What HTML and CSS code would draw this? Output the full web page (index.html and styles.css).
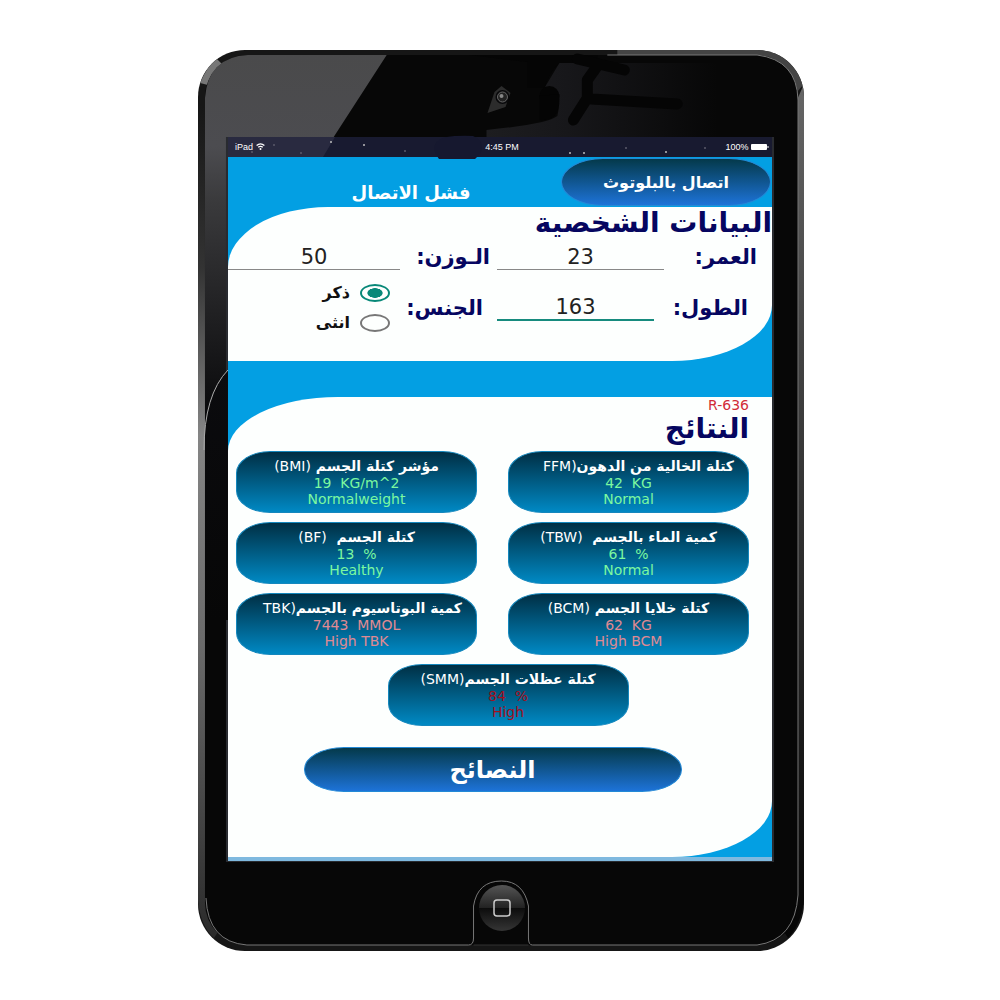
FILE: index.html
```html
<!DOCTYPE html>
<html lang="ar">
<head>
<meta charset="utf-8">
<meta name="viewport" content="width=device-width, initial-scale=1">
<title>البيانات الشخصية</title>
<link rel="stylesheet" href="styles.css">
</head>
<body>
<div class="tablet">
  <svg class="frame" viewBox="0 0 607 901" preserveAspectRatio="none" aria-hidden="true">
    <defs>
      <linearGradient id="gloss" x1="0" y1="0" x2="0" y2="1">
        <stop offset="0" stop-color="#4a4a4b"/><stop offset=".25" stop-color="#4c4c50"/><stop offset=".4" stop-color="#3a3a3c"/><stop offset="1" stop-color="#08080a"/>
      </linearGradient>
      <linearGradient id="edge" x1="0" y1="0" x2="0" y2="1">
        <stop offset="0" stop-color="#151515"/><stop offset=".2" stop-color="#333"/><stop offset=".4" stop-color="#858585"/><stop offset=".65" stop-color="#6a6a6a"/><stop offset="1" stop-color="#2a2a2a"/>
      </linearGradient>
      <linearGradient id="edgeRight" x1="0" y1="0" x2="0" y2="1">
        <stop offset="0" stop-color="#666"/><stop offset=".3" stop-color="#444"/><stop offset="1" stop-color="#050505"/>
      </linearGradient>
      <linearGradient id="haze"><stop offset="0" stop-color="#1d1d20"/><stop offset=".35" stop-color="#17171a"/><stop offset="1" stop-color="#070707"/></linearGradient>
      <linearGradient id="fade" x1="0" y1="0" x2="0" y2="1"><stop offset="0" stop-color="#0b0b0e"/><stop offset="1" stop-color="#070707"/></linearGradient>
      <clipPath id="body"><rect width="607" height="901" rx="47"/></clipPath>
    </defs>
    <g clip-path="url(#body)">
      <rect width="607" height="901" fill="#161616"/>
      <path d="M0 50V850Q2 875 16 888L24 876Q8 862 7 840V60Z" fill="url(#edge)"/>
      <path d="M607 34V850Q604 875 591 888L583 876Q598 862 600 840V50Z" fill="url(#edgeRight)"/>
      <path d="M420 0H607V34L600 42Q588 9 560 5H420Z" fill="#444"/>
      <path d="M2 33Q9 17 18 8L25 15Q14 24 10 35Z" fill="#777"/>
    </g>
    <rect x="7" y="5" width="594" height="890" rx="42" fill="#070707"/>
    <path d="M7 320V48Q10 7 50 5H189L121 110L90 150H30V370H7Z" fill="url(#gloss)"/>
    <path d="M362 13H520V87H289V80Q350 74 360 66Q366 40 347 38Z" fill="url(#haze)"/>
    <path d="M272 5H400V13H362Q352 22 347 38H330V12Z" fill="#050505"/>
    <circle cx="352" cy="46" r="10" fill="#040404"/>
    <path d="M342 46V70Q362 72 362 50V44Z" fill="#040404"/>
    <path d="M380 9L427 20M400 16L390 30V48L376 70M394 49L480 54" fill="none" stroke="#050505" stroke-width="11" stroke-linecap="round" stroke-linejoin="round"/>
    <path d="M290 63L297 42L304 36L313 43L308 57Z" fill="#2c2c2c"/>
    <circle cx="305" cy="47" r="7" fill="#08080a"/><circle cx="305" cy="47" r="5" fill="#222" stroke="#666"/><circle cx="304" cy="46" r="2" fill="#888"/>
    <path d="M28 87H577V812H28Z" fill="#292b30"/>
    <path d="M30 320Q7 347 7 400V570H30Z" fill="url(#fade)"/>
    <path d="M30 320Q6 345 6 400" fill="none" stroke="#aaa"/>
    <path d="M410 5H560Q600 10 601 50V845Q598 890 560 895H335Q331 895 331 888V856Q326 831 304 831Q280 831 276 856V888Q276 895 271 895H49Q10 892 8 848" fill="none" stroke="#777"/>
    <path d="M276 895H331" stroke="#333"/>
  </svg>

  <main class="screen">
    <div class="status-bar" dir="ltr">
      <svg class="stars" viewBox="0 0 544 20" preserveAspectRatio="none" aria-hidden="true">
        <path d="M0 0H107L95 20H0Z" fill="#292a40"/>
        <path d="M210 4Q215-2 245-1Q258 4 252 17L247 22H211Q202 10 210 4Z" fill="#16182f"/>
        <g fill="#bbb"><circle cx="103" cy="5" r="1"/><circle cx="136" cy="8" r="1"/><circle cx="356" cy="16" r="1"/><circle cx="342" cy="16" r="1"/><circle cx="438" cy="15" r="1"/></g>
        <g fill="#5a5a6a"><circle cx="46" cy="8" r="1"/><circle cx="24" cy="15" r="1"/><circle cx="177" cy="14" r="1"/><circle cx="398" cy="11" r="1"/><circle cx="477" cy="11" r="1"/><circle cx="73" cy="16" r="1"/></g>
      </svg>
      <span class="carrier">iPad
        <svg width="9" height="7" viewBox="0 0 9 7" aria-hidden="true"><path d="M0.6 2.6Q4.5-.8 8.4 2.6M2.2 4.3Q4.5 2.4 6.8 4.3" fill="none" stroke="#fff" stroke-width="1.3"/><circle cx="4.5" cy="6" r="1" fill="#fff"/></svg>
      </span>
      <span>4:45 PM</span>
      <span class="battery">100%
        <svg width="18" height="6" viewBox="0 0 18 6" aria-hidden="true"><rect width="16" height="6" rx="1" fill="#fff"/><path d="M17 2V4" stroke="#fff"/></svg>
      </span>
    </div>

    <div class="app" dir="rtl">
      <header class="top">
        <button class="action connect" type="button">اتصال بالبلوتوث</button>
        <p class="status">فشل الاتصال</p>
      </header>

      <form class="panel personal">
        <h1 class="heading">البيانات الشخصية</h1>
        <div class="fields first">
          <label for="age">العمر:</label>
          <input class="entry" id="age" type="text" inputmode="numeric" value="23">
          <label for="weight">الـوزن:</label>
          <input class="entry" id="weight" type="text" inputmode="numeric" value="50">
        </div>
        <div class="fields second">
          <label for="height">الطول:</label>
          <input class="entry" id="height" type="text" inputmode="numeric" value="163">
          <span class="name" id="sex">الجنس:</span>
          <div class="choices" role="radiogroup" aria-labelledby="sex">
            <label class="choice"><input type="radio" name="sex" checked>ذكر</label>
            <label class="choice"><input type="radio" name="sex">انثى</label>
          </div>
        </div>
      </form>

      <section class="panel results">
        <p class="code"><bdi>R-636</bdi></p>
        <h2 class="heading">النتائج</h2>
        <div class="cards">
          <article class="card good"><h3 class="long">كتلة الخالية من الدهون<span>(FFM</span></h3><p dir="ltr">42&nbsp; KG</p><p>Normal</p></article>
          <article class="card good"><h3>مؤشر كتلة الجسم <span>(BMI)</span></h3><p dir="ltr">19&nbsp; KG/m^2</p><p>Normalweight</p></article>
          <article class="card good"><h3>كمية الماء بالجسم &nbsp;<span>(TBW)</span></h3><p dir="ltr">61&nbsp; %</p><p>Normal</p></article>
          <article class="card good"><h3>كتلة الجسم &nbsp;<span>(BF)</span></h3><p dir="ltr">13&nbsp; %</p><p>Healthy</p></article>
          <article class="card high"><h3>كتلة خلايا الجسم <span>(BCM)</span></h3><p dir="ltr">62&nbsp; KG</p><p>High BCM</p></article>
          <article class="card high"><h3 class="long">كمية البوتاسيوم بالجسم<span>(TBK</span></h3><p dir="ltr">7443&nbsp; MMOL</p><p>High TBK</p></article>
          <article class="card alert"><h3>كتلة عظلات الجسم<span>(SMM)</span></h3><p dir="ltr">84&nbsp; %</p><p>High</p></article>
        </div>
        <button class="action advice" type="button">النصائح</button>
      </section>
    </div>
  </main>

  <footer class="chin">
    <button class="home" type="button" aria-label="Home">
      <svg width="18" height="18" viewBox="0 0 18 18" aria-hidden="true"><rect x="1" y="1" width="16" height="16" rx="3" fill="none" stroke="#ccc" stroke-width="1.5"/></svg>
    </button>
  </footer>
</div>
</body>
</html>
```
FILE: styles.css
```css
* {
  box-sizing: border-box;
  margin: 0;
}

body {
  padding: 50px 16px 48px 18px;
  background: #fff;
  font-family: "DejaVu Sans", "Noto Sans", sans-serif;
}

button,
input {
  font: inherit;
}

.tablet {
  position: relative;
  max-width: 606px;
  margin: 0 auto;
  padding: 87px 32px 0 30px;
}

.frame {
  position: absolute;
  inset: 0;
  width: 100%;
  height: 100%;
}

.screen {
  position: relative;
}

/* Status bar */
.status-bar {
  position: relative;
  display: grid;
  grid-template-columns: 1fr auto 1fr;
  align-items: center;
  height: 20px;
  padding: 0 3px 0 7px;
  background: #181a30;
  color: #fff;
  font: 9px/20px "Liberation Sans", Arial, sans-serif;
}

.stars {
  position: absolute;
  inset: 0;
  width: 100%;
  height: 100%;
  overflow: visible;
}

.status-bar span {
  position: relative;
}

.battery {
  text-align: right;
}

/* App */
.app {
  background: #039fe3;
  border-bottom: 4px solid #7fb9df;
}

.top {
  display: flex;
  height: 50px;
  padding: 1px;
}

.action {
  border: 1px solid #2389d6;
  background: linear-gradient(#04394a, #1d73d8);
  color: #fff;
  font-weight: bold;
  padding: 0;
}

.connect {
  width: 210px;
  height: 48px;
  border-radius: 42px / 24px;
  font-size: 16px;
}

.status {
  flex: 1;
  padding: 24px 0 0 32px;
  color: #fff;
  font-size: 18px;
  font-weight: bold;
  line-height: 22px;
  text-align: center;
}

.panel {
  background: #fdfffe;
}

.heading,
.fields {
  color: #060660;
  font-weight: bold;
}

.heading {
  font-size: 28px;
  line-height: 32px;
  white-space: nowrap;
}

.personal {
  height: 154px;
  border-radius: 100px 0 100px 0 / 60px 0 56px 0;
}

.fields {
  display: grid;
  font-size: 21px;
  line-height: 26px;
  white-space: nowrap;
}

.first {
  grid-template-columns: 108fr 167fr 97fr 172fr;
  padding-top: 5px;
}

.second {
  grid-template-columns: 118fr 157fr 96fr 173fr;
  padding-top: 10px;
}

.first > label {
  padding: 0 15px 0 0;
}

.first > label + .entry + label {
  padding-right: 7px;
}

.second > label {
  padding: 15px 24px 0 0;
}

.name {
  padding: 15px 14px 0 0;
}

.entry {
  min-width: 0;
  height: 26px;
  padding: 0;
  border: 0;
  border-bottom: 1px solid #888;
  background: none;
  color: #222;
  font-size: 21px;
  font-weight: normal;
  text-align: center;
}

.second .entry {
  height: 35px;
  padding-top: 8px;
  margin-top: 6px;
  border-bottom: 2px solid #168b7e;
}

.choices {
  display: grid;
  gap: 10px;
  align-content: start;
  padding: 3px 11px 0 0;
}

.choice {
  display: flex;
  align-items: center;
  gap: 10px;
  color: #111;
  font-size: 16px;
  line-height: 20px;
}

.choice input {
  appearance: none;
  width: 30px;
  height: 18px;
  margin: 0;
  border: 2px solid #777;
  border-radius: 50%;
}

.choice input:checked {
  border-color: #078878;
  background: radial-gradient(ellipse 8px 5px, #078878 90%, transparent);
}

/* Results */
.results {
  height: 460px;
  margin-top: 36px;
  padding: 0 23px 0 8px;
  border-radius: 110px 0 100px 0 / 54px 0 56px 0;
}

.code {
  color: #d12c38;
  font-size: 14px;
  line-height: 16px;
}

.results .heading {
  height: 38px;
}

.cards {
  display: flex;
  flex-wrap: wrap;
  justify-content: center;
  gap: 9px 31px;
}

.card {
  flex: 0 1 241px;
  height: 62px;
  padding: 5px 14px;
  border: 1px solid #1487bd;
  border-radius: 34px / 22px;
  background: linear-gradient(#002f44, #0089c4);
  font-size: 14px;
  line-height: 16px;
  text-align: center;
}

.card h3 {
  color: #fff;
  font-size: 14px;
  line-height: 18px;
  white-space: nowrap;
}

.card .long {
  text-align: start;
}

.card span {
  font-weight: normal;
}

.good {
  color: #7cf8a0;
}

.high {
  color: #e08a92;
}

.alert {
  margin-left: 31px;
  color: #a30f1c;
}

.advice {
  display: block;
  width: 378px;
  max-width: 100%;
  height: 45px;
  margin: 21px auto 0;
  border-radius: 40px / 22px;
  font-size: 24px;
}

/* Home button */
.chin {
  position: relative;
  display: flex;
  justify-content: center;
  height: 90px;
  padding: 24px 0 0 4px;
}

.home {
  display: grid;
  place-items: center;
  width: 46px;
  height: 46px;
  padding: 0;
  border: 0;
  border-radius: 50%;
  background: linear-gradient(#555, #222 50%, #0c0c0c 50%, #353535);
}
```
